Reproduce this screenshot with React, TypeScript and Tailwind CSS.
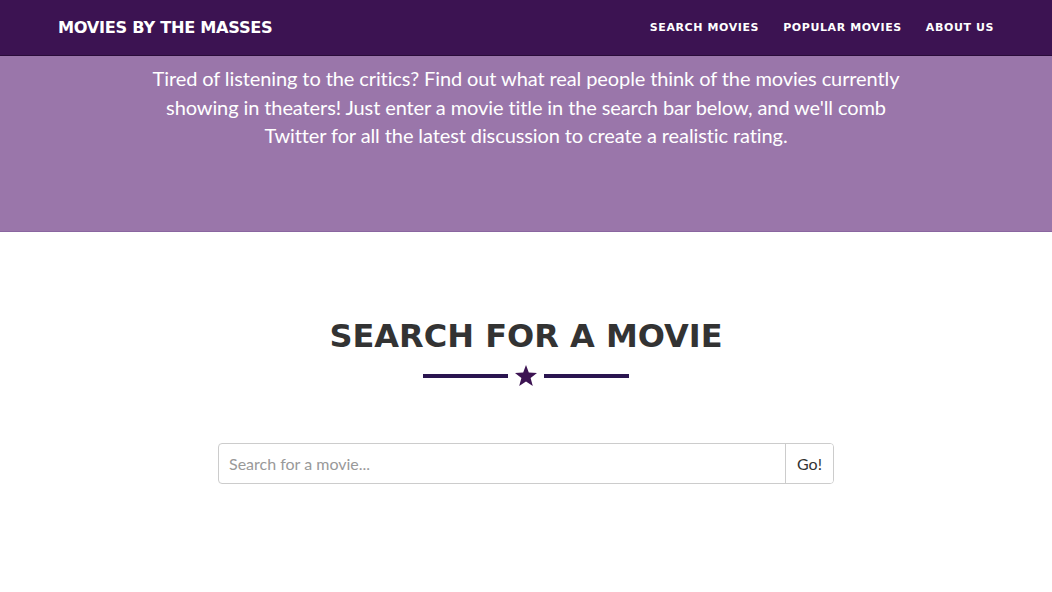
import React from "react";

export default function App() {
  const heading = { fontFamily: '"DejaVu Sans", "Liberation Sans", sans-serif' };
  const body = { fontFamily: 'Lato, "Open Sans", sans-serif' };
  return (
    <div className="w-[1052px] h-[592px] bg-white overflow-hidden" style={body}>
      <nav className="h-[56px] bg-[#3c1352] border-b border-[#2a0c3a] flex items-center justify-between pl-[58px] pr-[58px] pt-[2px]">
        <div className="text-white font-bold text-[16.2px] tracking-[-0.3px]" style={heading}>
          MOVIES BY THE MASSES
        </div>
        <div className="flex gap-[24px] text-white font-bold text-[11px] tracking-[0.6px]" style={heading}>
          <span>SEARCH MOVIES</span>
          <span>POPULAR MOVIES</span>
          <span>ABOUT US</span>
        </div>
      </nav>
      <section className="h-[176px] bg-[#9a76aa] border-b border-[#8a66a0] flex justify-center pt-[8px]">
        <p className="w-[780px] text-center text-white text-[20px] leading-[28.5px] tracking-[-0.1px]">
          Tired of listening to the critics? Find out what real people think of the movies currently
          showing in theaters! Just enter a movie title in the search bar below, and we'll comb
          Twitter for all the latest discussion to create a realistic rating.
        </p>
      </section>
      <section className="flex flex-col items-center pt-[84px]">
        <h2 className="text-[#333] text-[32px] font-semibold leading-[40px]" style={heading}>
          SEARCH FOR A MOVIE
        </h2>
        <div className="flex items-center gap-[6px] mt-[9px]">
          <div className="w-[85px] h-[4px] bg-[#2a1550]" />
          <svg width="24" height="22" viewBox="0 0 24 22">
            <polygon
              points="12,0 14.8,7.6 23,8 16.6,13 18.8,21 12,16.4 5.2,21 7.4,13 1,8 9.2,7.6"
              fill="#3c1352"
            />
          </svg>
          <div className="w-[85px] h-[4px] bg-[#2a1550]" />
        </div>
        <div className="mt-[56px] w-[616px] h-[41px] flex border border-[#ccc] rounded-[4px] overflow-hidden">
          <input
            className="flex-1 px-[10px] text-[16px] text-[#555] placeholder:text-[#999] outline-none"
            placeholder="Search for a movie..."
            style={body}
          />
          <button className="w-[48px] border-l border-[#ccc] bg-white text-[16px] text-[#333]" style={body}>
            Go!
          </button>
        </div>
      </section>
    </div>
  );
}
